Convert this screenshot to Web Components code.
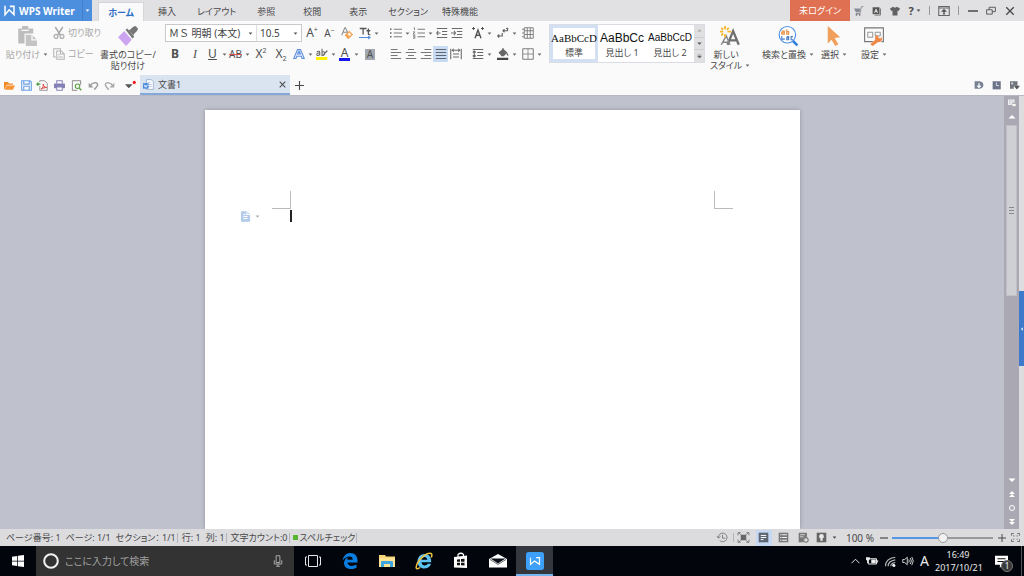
<!DOCTYPE html>
<html lang="ja">
<head>
<meta charset="utf-8">
<title>WPS Writer - 文書1</title>
<style>
html, body { margin: 0; height: 100%; }
body { font: 9px/12px "Noto Sans", "Noto Sans CJK JP", sans-serif; font-feature-settings: "palt"; color: #484848; overflow: hidden; }
</style>
</head>
<body>
<wps-app></wps-app>
<script>
const ICONS = {
  wps: '<path d="M1.500 1v13L7.500 7l7 7V2H8.500" fill="none" stroke="#fff" stroke-width="2.200"/>',
  caret: '<path d="M2 5h12l-6 7z" fill="currentColor"/>',
  up: '<path d="M1 11h14L8 4z" fill="currentColor"/>',
  down: '<path d="M1 5h14l-7 7z" fill="currentColor"/>',
  more: '<path d="M2 3h12M2 7h12l-6 6z" fill="currentColor" stroke="currentColor" stroke-width="1.500"/>',
  paste: '<path d="M1 2h3V0h5v2h4v4H6v8H1z" fill="#bdbdbd"/><path d="M3.500 3.500h6" stroke="#fafafa"/><path d="M7 7h5l4 4v5H7z" fill="#c4c4c4"/><path d="M12 7v4h4" fill="none" stroke="#fafafa"/>',
  cut: '<path d="M3 0l7 11M13 0L6 11" stroke="#aaa" stroke-width="2"/><g fill="none" stroke="#b4b4b4" stroke-width="1.800"><circle cx="4" cy="12.500" r="2.500"/><circle cx="12" cy="12.500" r="2.500"/></g>',
  copy: '<path d="M10 3V1H1v11h3M5 4h6l4 4v7H5zM10 4v4h5M7 9h2m-2 3h6" fill="none" stroke="#b4b4b4" stroke-width="1.400"/>',
  painter: '<path d="M5 4l6 7-4.500 5L0 9z" fill="#cda4f0"/><path d="M6 3l1.500-1L13 8.500 11.500 10z" fill="#777"/><path d="M8.500 3.500c2-.3 2.500-3 5.500-3.500l2 2c-.5 3-3 3-3.500 5.500z" fill="#777"/>',
  folder: '<path d="M0 3h6l1 2h6v2H4l-3 6H0z" fill="#f08a24"/><path d="M4 8h12l-3 6H1z" fill="#f79433"/>',
  save: '<path d="M1 1h12l2 2v12H1zM4 1v5h8V1M4 15V9h8v6" fill="none" stroke="#6aa0e8" stroke-width="1.600"/>',
  pdf: '<path d="M4 3V1h7l4 4v10H4V9" fill="none" stroke="#888" stroke-width="1.200"/><path d="M6 13c3-2 3.500-5 3-7 .5 3 2 4.500 5 5-3 0-5 .5-8 2z" fill="none" stroke="#d9362f" stroke-width="1.400"/><path d="M5 6H0m2-2L0 6l2 2" stroke="#4a9f3d" fill="none" stroke-width="2"/>',
  print: '<path d="M4 5V1h8v4" fill="#fff" stroke="#8583b8" stroke-width="1.500"/><rect y="5" width="16" height="7" rx="1" fill="#8280b4"/><path d="M4 10h8v5H4z" fill="#fff" stroke="#8583b8" stroke-width="1.500"/>',
  preview: '<path d="M14 7V1H2v14h7" fill="none" stroke="#777" stroke-width="1.200"/><circle cx="9.500" cy="9" r="3.300" fill="#eef7ea" stroke="#5da045" stroke-width="1.500"/><path d="M12 12l3 3" stroke="#5da045" stroke-width="2.200"/>',
  undo: '<path d="M3 9C5 4 13 2 14 6.500c.5 3-3 5.500-5 7.500" fill="none" stroke="#9a9a9a" stroke-width="2"/><path d="M1 4v7h7z" fill="#9a9a9a"/>',
  redo: '<path d="M13 9C11 4 3 2 2 6.500c-.5 3 3 5.500 5 7.500" fill="none" stroke="#aaa" stroke-width="2"/><path d="M15 4v7H8z" fill="#aaa"/>',
  quick: '<path d="M0 6h11l-5.500 6z" fill="#555"/><circle cx="13.500" cy="3.500" r="2.300" fill="#f01818"/>',
  docw: '<path d="M5 1h7l3 3v11H5z" fill="#fff" stroke="#7f9cc4"/><path d="M7 5h4M7 8h6M7 11h6" stroke="#9ab2d4"/><path d="M0 6h8v8H0z" fill="#3f86db"/><path d="M1.500 8l1.500 4 1-3 1 3 1.500-4" fill="none" stroke="#fff"/>',
  close: '<path d="M3 3l10 10M13 3L3 13" stroke="currentColor" stroke-width="1.800"/>',
  plus: '<path d="M8 0v16M0 8h16" stroke="currentColor" stroke-width="2"/>',
  minus: '<path d="M0 8h16" stroke="currentColor" stroke-width="2.400"/>',
  cart: '<path d="M0 4h10l-1 6H3z" fill="#888c96"/><path d="M15 1h-3l-2.500 11H3" fill="none" stroke="#888c96" stroke-width="1.500"/><circle cx="4" cy="14" r="1.500" fill="#777"/><circle cx="9" cy="14" r="1.500" fill="#777"/>',
  card: '<path d="M1 2h11v11H1z" fill="#555"/><path d="M13.500 4v10.500H4" stroke="#777" stroke-width="1.600" fill="none"/><path d="M4 11l2.500-6L9 11M5 9h3" stroke="#eee" stroke-width="1.400" fill="none"/>',
  shirt: '<path d="M5 1q3 3 6 0l5 3-2 4-2-1v8H4V7L2 8 0 4z" fill="#616161"/>',
  upbox: '<path d="M1 2h14v12H1zM1 4h14" fill="none" stroke="#666" stroke-width="1.400"/><path d="M8 5l4 4H9v4H7V9H4z" fill="#555"/>',
  restore: '<path d="M1 6h9v7H1zM5 6V2h10v7h-5" fill="none" stroke="#555" stroke-width="1.500"/>',
  eraser: '<path d="M1 11L5 1h1l4 9M3 7h5" fill="none" stroke="#8e8e8e" stroke-width="1.400"/><path d="M6 11l5-5 4 4-5 5z" fill="#fff3e4" stroke="#f0a050" stroke-width="1.600"/><path d="M6 11l2-2 4 4-2 2H8z" fill="#f2a452"/>',
  cases: '<path d="M1 2h9M5.500 2v8M10 5h5m-2.500-3v7q0 1.500 2.500 1" fill="none" stroke="#555" stroke-width="1.700"/><path d="M0 14h15m-3-2l3 2-3 2" stroke="#4a86dd" stroke-width="1.300" fill="none"/>',
  bullets: '<path d="M5 3h11M5 8h11M5 13h11" stroke="#777" stroke-width="1.300"/><path d="M0 2h2v2H0zM0 7h2v2H0zM0 12h2v2H0z" fill="#666"/>',
  numbers: '<path d="M6 3h10M6 8h10M6 13h10" stroke="#777" stroke-width="1.300"/><path d="M1 1h1v3M0 6.500h2.500L0 9.500h3M0 11.500h2.500v3.500H0m0-1.800h2" fill="none" stroke="#666"/>',
  outdent: '<path d="M1 2h14M8 6h7M8 10h7M1 14h14M6 8H1m2-3L1 8l2 3" fill="none" stroke="#6a6a6a" stroke-width="1.400"/>',
  indent: '<path d="M1 2h14M8 6h7M8 10h7M1 14h14M0 8h6M4 5l2 3-2 3" fill="none" stroke="#6a6a6a" stroke-width="1.400"/>',
  asian: '<path d="M4 15L8 4l4 11M5.500 11h5" fill="none" stroke="#505050" stroke-width="1.800"/><path d="M0 2h4M2 0v4M12 2h4M14 0v4" stroke="#505050" stroke-width="1.300"/>',
  marks: '<path d="M14 1v4H8m2-2L8 5l2 2M7 8v4H1m2-2l-2 2 2 2M12 2h3" fill="none" stroke="#666" stroke-width="1.600"/>',
  grid: '<path d="M3 1h12v14H3zM3 5h12M3 10h12M7 1v14M11 1v14M0 3h3M0 8h3M0 13h3" fill="none" stroke="#777" stroke-width="1.200"/>',
  left: '<path d="M1 2h9M1 6h14M1 10h9M1 14h14" stroke="#777" stroke-width="1.400"/>',
  center: '<path d="M4 2h8M1 6h14M4 10h8M1 14h14" stroke="#777" stroke-width="1.400"/>',
  right: '<path d="M6 2h9M1 6h14M6 10h9M1 14h14" stroke="#777" stroke-width="1.400"/>',
  justify: '<path d="M1 2h14M1 6h14M1 10h14M1 14h14" stroke="#5f6672" stroke-width="1.600"/>',
  dist: '<path d="M1 1v14M15 1v14M4 8h8M4 12h8M3 3h10m-8-2L3 3l2 2m6-4l2 2-2 2" fill="none" stroke="#6a6a6a" stroke-width="1.400"/>',
  spacing: '<path d="M1 2h14M7 6h8M7 10h8M1 14h14M3 4v8M1 6l2-2 2 2m-4 4l2 2 2-2" fill="none" stroke="#666" stroke-width="1.500"/>',
  fill: '<path d="M2 6l6-5 6 5-5 5H6z" fill="#666"/><path d="M13 6q3 2 2 5l-2-2z" fill="#666"/><path d="M8 0v4" stroke="#666" stroke-width="1.500"/><path d="M0 13h15v3H0z" fill="#444"/>',
  border: '<path d="M1 1h14v14H1z" fill="none" stroke="#777" stroke-width="1.300"/><path d="M8 1v14M1 8h14" stroke="#888" stroke-width="1.200"/>',
  highlight: '<path d="M0 12h15v4H0z" fill="#fff200"/><path d="M1 5q4-2 4 1v4M5 7q-4-1-4 1.500T5 9M8 1v9q4 0 3.500-3T8 5.500" fill="none" stroke="#666" stroke-width="1.400"/><path d="M8 10l6-7 2 1-6 6z" fill="#777"/>',
  outlineA: '<path d="M1 14L6 2h4l5 12h-3l-1-3H5l-1 3zM6 8h4L8 4z" fill="#e6effd" stroke="#5e8fdc" stroke-width="1.400"/>',
  newstyle: '<path d="M6 15l4.500-11L15 15M7.500 11.500h6" fill="none" stroke="#707070" stroke-width="1.800"/><path d="M1 15L5 8l3 7M2 13h5" fill="none" stroke="#888" stroke-width="1.200"/><path d="M4 0v2.500M4 6.500V9M0 4.500h2.500M6 4.500h3M1 1.500l1.500 1.500M7 1.500L5.500 3M1 7.500L2.500 6" stroke="#fbb62f" stroke-width="1.500"/>',
  search: '<circle cx="7.500" cy="7" r="6.600" fill="#fff" stroke="#4a90e2" stroke-width=".9"/><path d="M12 12l3.500 3.500" stroke="#2f7fdd" stroke-width="2"/><path d="M3 4h2v2.500H3V5h2M7 2.500v4h1.500V4.500H7" fill="none" stroke="#eb8c3c" stroke-width=".9"/><path d="M3 8v2.500h2.500M7 8.500h1.500V11H7V9.500h1.500M12 8.500h-1.500V11H12" fill="none" stroke="#4a80c8" stroke-width=".9"/>',
  pointer: '<path d="M3 0l10 9-4.500.5 3 5-2.500 1.500-3-5L3 14z" fill="#f0a05a"/>',
  settings: '<path d="M7 12.500H.5V1.500h15v11H14" fill="none" stroke="#777" stroke-width=".9"/><path d="M3 5h4v4H3zM9 5h4v3H9z" fill="none" stroke="#888" stroke-width=".7"/><path d="M5 14.500l4-3.500q-1-3 2-4v2l2 1 1.500-1q.5 4-3.500 4l-4 3z" fill="#ef8745"/>',
  download: '<path d="M1 2h8q6 1 6 6t-6 6H1z" fill="#788094"/><path d="M7 5v4H4l4 4 4-4H9V5z" fill="#fff"/>',
  clockbox: '<path d="M1 2h13v13H1z" fill="#6c7488"/><path d="M7 4v5h4" fill="none" stroke="#dde" stroke-width="1.500"/>',
  panel: '<path d="M0 2h12v7H6v5H0z" fill="#70757e"/><path d="M2 4h3v3H2z" fill="#ddd"/><path d="M6 9h10l-5 6z" fill="#555"/>',
  ruler: '<path d="M0 1h13v6H9v5H0z" fill="#eceef2"/><path d="M2 4h3M7 4h3M2 8h3" stroke="#888"/><path d="M8 9h8v6H8z" fill="#f7f7f7" stroke="#999"/>',
  dup: '<path d="M2 8h12L8 2zM2 14h12L8 8z" fill="currentColor"/>',
  ddown: '<path d="M2 2h12L8 8zM2 8h12l-6 6z" fill="currentColor"/>',
  ring: '<circle cx="8" cy="8" r="5" fill="none" stroke="currentColor" stroke-width="2"/>',
  pagetag: '<path d="M2 1h8l4 4v10H2z" fill="#b5cdec" stroke="#a3bfe4"/><path d="M10 1v4h4M5 5h3M5 8h6M5 11h6" fill="none" stroke="#fff" stroke-width="1.500"/>',
  history: '<path d="M2 8a6.300 6.300 0 1 1 2 4.500M0 6l2 3 3-2.500M8 4v5h4" fill="none" stroke="#777" stroke-width="1.300"/>',
  full: '<path d="M4 4h8v8H4z" fill="#666"/><path d="M0 5V1h4M12 1h4v4M16 11v4h-4M4 15H0v-4M1 1l3 3M15 1l-3 3M1 15l3-3M15 15l-3-3" fill="none" stroke="#777" stroke-width="1.300"/>',
  printview: '<path d="M1 1h14v14H1z" fill="#5d6673"/><path d="M4 5h8M4 8h8M4 11h4" stroke="#fff" stroke-width="1.400"/>',
  outline: '<path d="M1 1h14v14H1z" fill="#777"/><path d="M3 4h2m1 0h7M3 8h2m1 0h7M3 12h2m1 0h7" stroke="#fff" stroke-width="1.300"/>',
  web: '<path d="M1 1h12v6L8 9v6H1z" fill="#777"/><path d="M3 4h7M3 7h5" stroke="#ddd" stroke-width="1.300"/><circle cx="11.500" cy="11.500" r="3.300" fill="#ddd" stroke="#777" stroke-width="1.500"/>',
  eye: '<path d="M1 1h14v14H1z" fill="#666"/><circle cx="8" cy="6.500" r="3.500" fill="#e8e8e8"/><path d="M6.500 9h3v4h-3z" fill="#e8e8e8"/>',
  fit: '<path d="M1 5V1h4M11 1h4v4M15 11v4h-4M5 15H1v-4" fill="none" stroke="#777" stroke-width="1.800"/><path d="M4 4h2v2H4zM10 4h2v2h-2zM4 10h2v2H4zM10 10h2v2h-2z" fill="#777"/>',
  win: '<path d="M0 2.300l7-1v6.200H0zM8 1.100L16 0v7.500H8zM0 8.500h7v6.200l-7-1zM8 8.500h8V16l-8-1.100z" fill="#fff"/>',
  cortana: '<circle cx="8" cy="8" r="6.800" fill="none" stroke="#f2f2f2" stroke-width="2"/>',
  mic: '<path d="M5.500 1h5v9h-5zM3 7v5h10V7M8 12v3M5.500 15h5" fill="none" stroke="#b5b5b5" stroke-width="1.200"/>',
  taskview: '<path d="M3.500 2.500h9v11h-9zM2 4H.5v8H2M14 4h1.500v8H14" fill="none" stroke="#e6e6e6" stroke-width="1"/>',
  edge: '<path d="M.5 7.500C1.500 2.500 4.500 0 8.500 0 13 0 15.500 3.500 15.500 7v2.500H5.500c.2 4 5.500 4.200 9 2v3.200C10 17 2.500 16.500 2 10.500 2 7.500 3.500 5.300 6 4.500c-.5.700-.7 1.300-.7 2.200h5.400C10.700 2 4.500 2.500.5 7.500z" fill="#0a7ee0"/>',
  files: '<path d="M0 2h6l1 1.500h9V14H0z" fill="#f5d377"/><path d="M0 5h16v9H0z" fill="#fde394"/><path d="M2 14V9q0-1 1-1h10q1 0 1 1v5h-3v-3H5v3z" fill="#3fa7df"/>',
  ie: '<path d="M1.500 8.500C1.500 4 4.500 1 8.700 1 13 1 15.500 4.500 15.200 9.200H5.500c.3 4 5 4 6.200 1.600H15C13.500 17.300 1.500 17.500 1.500 8.500zM5.500 6.800h5.800C11 3 5.800 3 5.500 6.800z" fill="#5cc3f4"/><path d="M4 14.500C1 17 -.5 15.500.5 12.500 2.500 6 11-.8 15 .5c1.300.5 1 2.500.2 4" fill="none" stroke="#f0c33c" stroke-width="1.500"/>',
  store: '<path d="M1 4l13-1.500V15L1 14.500z" fill="#fff"/><path d="M5 4V1.500Q8-1 10.500 1.500V3" fill="none" stroke="#fff" stroke-width="1.200"/><path d="M4 6.500l3-.3v2.600H4zM8 6.100l3.500-.3v3H8zM4 9.700h3v2.500H4zM8 9.700h3.500v2.900L8 12.300z" fill="#111"/>',
  mail: '<path d="M-1 6l9-5 9 5v8.500H-1z" fill="#fff"/><path d="M.5 5.500h15L8 10.500z" fill="#0c1018"/><path d="M0 6.500l8 5 8-5" stroke="#0c1018" stroke-width=".6" fill="none"/>',
  wpsapp: '<rect width="16" height="16" rx="2.500" fill="#3da0fb"/><path d="M4 5v6l3.500-3 4.500 3V5H9" fill="none" stroke="#fff" stroke-width="1.100"/>',
  chevron: '<path d="M1 11l7-7 7 7" fill="none" stroke="#eee" stroke-width="1.700"/>',
  battery: '<path d="M3 5h11v7H3zM15.500 7v3" fill="none" stroke="#eee" stroke-width="1.300"/><path d="M7 6h6v5H7z" fill="#eee"/><path d="M0 3h5v3L3.500 7.500v3h-2v-3L0 6z" fill="#eee"/>',
  wifi: '<path d="M12 15h3M9 15q0-4 6-5M5.500 15q0-7 9.500-8.500M2 15Q2 4.500 15 3" fill="none" stroke="#bbb" stroke-width="1.500"/><circle cx="13" cy="13.500" r="2" fill="#eee"/>',
  sound: '<path d="M1 6h2.500L7 3v10L3.500 10H1zM9 6q1.500 2 0 4M11 4q3 4 0 8M13 2.500q4 5.500 0 11" fill="none" stroke="#e0e0e0" stroke-width="1.200"/>',
  notes: '<path d="M0 1h16v11H9l-3 4v-4H0z" fill="#fff"/><path d="M3 4.500h10M3 8h10" stroke="#111" stroke-width="1.300"/>'
};

const BASE = `
  *, *::before { box-sizing: border-box; }
  button { font: inherit; color: inherit; border: 0; background: none; padding: 0; margin: 0; display: flex; align-items: center; justify-content: center; flex: none; white-space: nowrap; }
  .grow { flex: 1; }
`;

function define(name, css, html) {
  customElements.define(name, class extends HTMLElement {
    constructor() {
      super();
      const root = this.attachShadow({ mode: 'open' });
      const tpl = document.createElement('template');
      tpl.innerHTML = `<style>${BASE}${css}</style>${typeof html === 'function' ? html(this) : html}`;
      root.append(tpl.content.cloneNode(true));
    }
  });
}

/* Square icon: name picks the drawing, --size sets its side. */
define('ui-icon', `
  :host { display: block; flex: none; width: var(--size, 12px); height: var(--size, 12px); }
  svg { display: block; width: 100%; height: 100%; overflow: visible; }
`, el => `<svg viewBox="0 0 16 16" aria-hidden="true">${ICONS[el.getAttribute('name')] || ''}</svg>`);

/* Small ribbon tool; "split" adds a drop-down arrow, "wide" more room. */
define('ui-tool', `
  :host { display: block; flex: none; width: 15px; }
  :host([wide]) { width: 20px; }
  :host([split]) { width: 23px; }
  :host([split][wide]) { width: 25px; }
  button { width: 100%; height: 16px; justify-content: center; }
  :host([split]) button { justify-content: flex-start; }
  .face { width: 15px; display: flex; justify-content: center; }
  .arrow { --size: 5px; margin-left: 2px; color: #666; }
  :host([active]) button { background: #c9dbf3; }
  ui-icon { --size: 12px; }
`, el => `<button type="button" aria-label="${el.getAttribute('label')}"><span class="face">${el.hasAttribute('icon') ? `<ui-icon name="${el.getAttribute('icon')}"></ui-icon>` : '<slot></slot>'}</span>${el.hasAttribute('split') ? '<ui-icon class="arrow" name="caret"></ui-icon>' : ''}</button>`);

/* Large ribbon button: icon above one or two lines of label. */
define('ui-big', `
  :host { display: block; flex: none; text-align: center; }
  button { flex-direction: column; justify-content: flex-start; width: 100%; line-height: 11px; }
  ui-icon { --size: 20px; margin-bottom: 3px; }
  .text { display: flex; align-items: end; gap: 3px; }
  .arrow { --size: 5px; margin: 0 0 3px; color: #666; }
  .lines { display: block; }
`, el => `<button type="button"><ui-icon name="${el.getAttribute('icon')}"></ui-icon><span class="text"><span class="lines"><slot></slot></span>${el.hasAttribute('split') ? '<ui-icon class="arrow" name="caret"></ui-icon>' : ''}</span></button>`);

define('wps-titlebar', `
  :host { display: flex; height: 21px; background: #e1e1e4; align-items: stretch; }
  .brand { width: 92px; background: #4b8fde; color: #fff; display: flex; align-items: center; font: bold 10px/20px "Noto Sans", sans-serif; padding-left: 4px; gap: 4px; }
  .brand ui-icon { --size: 11px; }
  .brand button { width: 10px; height: 21px; border-left: 1px solid #4280cc; margin-left: auto; }
  .brand button ui-icon { --size: 5px; }
  nav { display: flex; margin-left: 6px; padding-top: 2px; }
  nav button { min-width: 46px; padding: 1px 7px 0; }
  nav button[aria-selected=true] { background: #fafafa; color: #2d70c8; font-weight: bold; border: 1px solid #d6d6da; border-bottom: 0; }
  .login { width: 60px; background: #df7052; color: #fff; }
  .sys { display: flex; align-items: center; width: 174px; justify-content: space-between; padding: 0 8px 0 4px; }
  .sys ui-icon { --size: 10px; }
  .sys .big { --size: 12px; }
  .help { font: bold 11px/16px "Noto Sans", sans-serif; gap: 2px; }
  .sys .help ui-icon { --size: 5px; }
  i { width: 1px; height: 9px; background: #999; }
`, `
  <div class="brand"><ui-icon name="wps"></ui-icon><span>WPS Writer</span><button type="button" aria-label="アプリケーションメニュー"><ui-icon name="caret"></ui-icon></button></div>
  <nav role="tablist">
    ${['ホーム','挿入','レイアウト','参照','校閲','表示','セクション','特殊機能'].map((t, i) => `<button type="button" role="tab" aria-selected="${i === 0}">${t}</button>`).join('')}
  </nav>
  <span class="grow"></span>
  <button type="button" class="login">未ログイン</button>
  <div class="sys">
    <button type="button" aria-label="ストア"><ui-icon name="cart"></ui-icon></button>
    <button type="button" aria-label="フォント"><ui-icon name="card"></ui-icon></button>
    <button type="button" aria-label="スキン"><ui-icon name="shirt"></ui-icon></button>
    <button type="button" class="help">?<ui-icon name="caret"></ui-icon></button>
    <i></i>
    <button type="button" aria-label="リボンを隠す"><ui-icon class="big" name="upbox"></ui-icon></button>
    <i></i>
    <button type="button" aria-label="最小化"><ui-icon name="minus"></ui-icon></button>
    <button type="button" aria-label="元に戻す"><ui-icon name="restore"></ui-icon></button>
    <button type="button" aria-label="閉じる"><ui-icon class="big" name="close"></ui-icon></button>
  </div>
`);

define('wps-gallery', `
  :host { display: flex; flex: none; height: 39px; background: #fff; border: 1px solid #d9dce2; }
  .item { width: 48px; flex-direction: column; border: 3px solid transparent; padding: 2px 0 0; align-items: center; justify-content: space-between; }
  .item[aria-pressed=true] { border-color: #d3e0f3; }
  .item b { color: #111; font: 11px/16px "Liberation Serif", serif; }
  .item.h1 b { font: 12px/16px "Liberation Sans", sans-serif; }
  .item.h2 b { font: 10px/16px "Liberation Sans", sans-serif; }
  .scroll { display: flex; flex-direction: column; width: 10px; }
  .scroll button { flex: 1; width: 100%; background: #e0e0e2; border-top: 1px solid #cfcfd2; color: #555; }
  .scroll button:first-child { color: #aaa; border: 0; }
  ui-icon { --size: 5px; }
`, `
  <button type="button" class="item" aria-pressed="true"><b>AaBbCcD</b><span>標準</span></button>
  <button type="button" class="item h1"><b>AaBbCc</b><span>見出し 1</span></button>
  <button type="button" class="item h2"><b>AaBbCcD</b><span>見出し 2</span></button>
  <div class="scroll"><button type="button" aria-label="上へ"><ui-icon name="up"></ui-icon></button><button type="button" aria-label="下へ"><ui-icon name="down"></ui-icon></button><button type="button" aria-label="その他"><ui-icon name="more"></ui-icon></button></div>
`);

define('wps-ribbon', `
  :host { display: flex; align-items: flex-start; height: 54px; background: #fafafa; padding-top: 3px; }
  .row { display: flex; align-items: center; height: 18px; }
  .rows { display: flex; flex-direction: column; gap: 3px; flex: none; }
  .clip { display: flex; width: 165px; padding-left: 3px; }
  .clip .rows { width: 49px; }
  .off { color: #a6a6a6; }
  .clip .rows button { justify-content: flex-start; gap: 3px; height: 18px; padding-left: 2px; }
  .w48 { width: 48px; } .w56 { width: 56px; } .w40 { width: 40px; }
  ui-big { padding-top: 2px; }
  .font { width: 223px; }
  .combo { position: relative; display: flex; align-items: center; height: 18px; border: 1px solid #c9c9cc; background: #fff; }
  .combo + .combo { border-left-color: #ddd; margin-left: -1px; }
  .combo select { appearance: none; border: 0; background: none; width: 100%; height: 16px; padding: 0 10px 0 3px; font: 10px/16px "Noto Sans", "Noto Sans CJK JP", sans-serif; color: #444; }
  .combo ui-icon { --size: 5px; position: absolute; right: 3px; color: #555; pointer-events: none; }
  .face { width: 92px; } .size { width: 46px; }
  .s { font: 12px/16px "Noto Sans", sans-serif; color: #505050; }
  .s em { font-family: "Liberation Serif", serif; }
  .s.sm { font-size: 10px; }
  sup, sub { font-size: 7px; line-height: 0; }
  s { text-decoration-color: #d9534f; }
  .col { line-height: 10px; border-bottom: 3px solid #1616f0; padding: 0 2px; }
  .shade { background: #a2a6ae; font-size: 10px; line-height: 11px; padding: 0 2px; }
  .paraA { width: 82px; } .paraB { width: 79px; }
  wps-gallery { margin-right: 5px; }
  .find { margin-left: 12px; }
`, `
  <div class="clip">
    <ui-big class="w48 off" icon="paste" split>貼り付け</ui-big>
    <div class="rows off"><button type="button"><ui-icon name="cut"></ui-icon>切り取り</button><button type="button"><ui-icon name="copy"></ui-icon>コピー</button></div>
    <ui-big class="w56" icon="painter">書式のコピー/<br>貼り付け</ui-big>
  </div>
  <div class="rows font">
    <div class="row">
      <label class="combo face"><select aria-label="フォント"><option>ＭＳ 明朝 (本文)</option></select><ui-icon name="caret"></ui-icon></label>
      <label class="combo size"><select aria-label="フォントサイズ"><option>10.5</option></select><ui-icon name="caret"></ui-icon></label>
      <ui-tool wide label="拡大"><span class="s">A<sup>+</sup></span></ui-tool>
      <ui-tool label="縮小"><span class="s sm">A<sup>−</sup></span></ui-tool>
      <ui-tool wide label="書式のクリア" icon="eraser"></ui-tool>
      <ui-tool split label="文字種の変換" icon="cases"></ui-tool>
    </div>
    <div class="row">
      <ui-tool wide label="太字"><span class="s"><b>B</b></span></ui-tool>
      <ui-tool wide label="斜体"><span class="s"><em>I</em></span></ui-tool>
      <ui-tool split label="下線"><span class="s"><u>U</u></span></ui-tool>
      <ui-tool split label="取り消し線"><span class="s sm"><s>AB</s></span></ui-tool>
      <ui-tool wide label="上付き"><span class="s">X<sup>2</sup></span></ui-tool>
      <ui-tool wide label="下付き"><span class="s">X<sub>2</sub></span></ui-tool>
      <ui-tool split label="文字の効果" icon="outlineA"></ui-tool>
      <ui-tool split label="蛍光ペン" icon="highlight"></ui-tool>
      <ui-tool split label="フォントの色"><span class="s col">A</span></ui-tool>
      <ui-tool wide label="文字の網かけ"><span class="s shade">A</span></ui-tool>
    </div>
  </div>
  <div class="rows paraA">
    <div class="row"><ui-tool split label="箇条書き" icon="bullets"></ui-tool><ui-tool split label="段落番号" icon="numbers"></ui-tool><ui-tool label="インデントを減らす" icon="outdent"></ui-tool><ui-tool label="インデントを増やす" icon="indent"></ui-tool></div>
    <div class="row"><ui-tool label="左揃え" icon="left"></ui-tool><ui-tool label="中央揃え" icon="center"></ui-tool><ui-tool label="右揃え" icon="right"></ui-tool><ui-tool active label="両端揃え" icon="justify"></ui-tool><ui-tool label="均等割り付け" icon="dist"></ui-tool></div>
  </div>
  <div class="rows paraB">
    <div class="row"><ui-tool split wide label="拡張書式" icon="asian"></ui-tool><ui-tool split wide label="編集記号" icon="marks"></ui-tool><ui-tool label="グリッド線" icon="grid"></ui-tool></div>
    <div class="row"><ui-tool split wide label="行間" icon="spacing"></ui-tool><ui-tool split wide label="塗りつぶし" icon="fill"></ui-tool><ui-tool split wide label="罫線" icon="border"></ui-tool></div>
  </div>
  <wps-gallery></wps-gallery>
  <ui-big class="w40" icon="newstyle" split>新しい<br>スタイル</ui-big>
  <ui-big class="find" icon="search" split>検索と置換</ui-big>
  <ui-big class="w40" icon="pointer" split>選択</ui-big>
  <ui-big class="w40" icon="settings" split>設定</ui-big>
`);

define('wps-filebar', `
  :host { display: flex; height: 20px; background: #fafafa; align-items: center; }
  .quick { display: flex; width: 140px; justify-content: space-between; padding: 0 4px; }
  ui-icon { --size: 11px; }
  .quick button:nth-last-child(2) { margin-right: 4px; }
  .tab { display: flex; align-items: center; width: 150px; height: 20px; background: #dae4f1; border-bottom: 2px solid #85a8db; padding: 1px 3px 0; gap: 4px; }
  .tab button { margin-left: auto; }
  .tab button ui-icon { --size: 9px; }
  .add { margin-left: 5px; }
  .add ui-icon { --size: 9px; }
  .side { display: flex; gap: 8px; margin-left: auto; padding-right: 4px; }
  .side ui-icon { --size: 10px; }
`, `
  <div class="quick">${[['folder','開く'],['save','保存'],['pdf','PDF出力'],['print','印刷'],['preview','プレビュー'],['undo','元に戻す'],['redo','やり直し'],['quick','カスタマイズ']].map(([n, l]) => `<button type="button" aria-label="${l}"><ui-icon name="${n}"></ui-icon></button>`).join('')}</div>
  <div class="tab"><ui-icon name="docw"></ui-icon><span>文書1</span><button type="button" aria-label="文書を閉じる"><ui-icon name="close"></ui-icon></button></div>
  <button type="button" class="add" aria-label="新規文書"><ui-icon name="plus"></ui-icon></button>
  <div class="side"><button type="button" aria-label="ダウンロード"><ui-icon name="download"></ui-icon></button><button type="button" aria-label="履歴"><ui-icon name="clockbox"></ui-icon></button><button type="button" aria-label="パネル"><ui-icon name="panel"></ui-icon></button></div>
`);

define('wps-page', `
  :host { display: block; flex: none; width: 595px; background: #fff; box-shadow: 0 0 4px #8e919c; padding: 81px 67px 0; }
  .marks { display: flex; justify-content: space-between; }
  .marks i { width: 19px; height: 18px; border: 1px solid #bbb; border-top: 0; }
  .marks i:first-child { border-left: 0; }
  .marks i:last-child { border-right: 0; }
  .line { display: flex; align-items: center; margin: 1px 0 0 -32px; height: 12px; }
  .line ui-icon { --size: 11px; }
  .line button { gap: 4px; }
  .line .arrow { --size: 5px; color: #aaa; }
  .caret { width: 2px; height: 12px; background: #222; margin-left: 30px; }
`, `
  <div class="marks"><i></i><i></i></div>
  <div class="line"><button type="button" aria-label="段落オプション"><ui-icon name="pagetag"></ui-icon><ui-icon class="arrow" name="caret"></ui-icon></button><span class="caret"></span></div>
`);

define('wps-canvas', `
  :host { display: flex; flex: 1; min-height: 0; background: #bfc2cc; border-top: 1px solid #b6b8c2; }
  .view { flex: 1; display: flex; justify-content: center; padding-top: 14px; overflow: hidden; }
  .scroll { width: 15px; background: #aaa9b3; display: flex; flex-direction: column; align-items: center; color: #fff; }
  .scroll ui-icon { --size: 8px; }
  .scroll button { width: 15px; height: 14px; }
  .track { flex: 1; align-self: stretch; padding: 1px 2px 0; }
  .thumb { height: 49%; background: #cfd0d4; border: 1px solid #bfc0c6; display: flex; flex-direction: column; gap: 2px; align-items: center; justify-content: center; }
  .thumb i { width: 5px; height: 1px; background: #888; }
  .side { width: 5px; background: #dddde0; display: flex; align-items: center; }
  .side button { width: 5px; height: 75px; background: #3d7acb; color: #fff; margin-top: 32px; }
  .side ui-icon { --size: 4px; transform: rotate(-90deg); }
`, `
  <div class="view"><wps-page></wps-page></div>
  <div class="scroll">
    <button type="button" aria-label="ルーラー"><ui-icon name="ruler"></ui-icon></button>
    <button type="button" aria-label="上へスクロール"><ui-icon name="up"></ui-icon></button>
    <div class="track"><div class="thumb"><i></i><i></i><i></i></div></div>
    <button type="button" aria-label="下へスクロール"><ui-icon name="down"></ui-icon></button>
    <button type="button" aria-label="前のページ"><ui-icon name="dup"></ui-icon></button>
    <button type="button" aria-label="オブジェクトの選択"><ui-icon name="ring"></ui-icon></button>
    <button type="button" aria-label="次のページ"><ui-icon name="ddown"></ui-icon></button>
  </div>
  <div class="side"><button type="button" aria-label="作業ウィンドウ"><ui-icon name="up"></ui-icon></button></div>
`);

define('wps-status', `
  :host { display: flex; align-items: center; height: 17px; background: #dcdcdf; padding: 0 3px 0 6px; white-space: nowrap; }
  .info { display: flex; align-items: center; gap: 5px; }
  .info + .info { padding-left: 4px; }
  .sep { width: 1px; height: 9px; background: #b4b4b8; }
  .bar { border-right: 1px solid #b4b4b8; padding-right: 1px; line-height: 10px; }
  .spell { display: flex; align-items: center; gap: 2px; padding-left: 3px; }
  .spell i { width: 5px; height: 5px; background: #58b531; }
  .tools { display: flex; align-items: center; margin-left: auto; }
  .tools button { width: 20px; height: 16px; }
  .tools ui-icon { --size: 11px; }
  .tools .on { width: 16px; background: #c6d8f2; margin: 0 2px; }
  .tools .drop { gap: 5px; width: 26px; }
  .tools .drop .arrow { --size: 5px; }
  .zoom { margin: 0 5px 0 6px; font-size: 10px; }
  .tools .step { width: 9px; }
  .tools .step ui-icon { --size: 8px; }
  .tools .fit { width: 12px; margin-left: 3px; }
  .tools .fit ui-icon { --size: 9px; }
  input { appearance: none; width: 101px; height: 12px; margin: 0 4px; background: linear-gradient(90deg, #5596e6 50%, #999 50%) center/100% 2px no-repeat; }
  input::-webkit-slider-thumb { appearance: none; width: 10px; height: 10px; border-radius: 50%; background: #f2f2f2; border: 1px solid #999; }
`, `
  <div class="info"><span>ページ番号: 1</span><span>ページ: 1/1</span><span class="bar">セクション： 1/1</span></div>
  <div class="info"><span>行: 1</span><span class="bar">列: 1</span></div>
  <div class="info"><span class="bar">文字カウント:0</span></div>
  <div class="spell bar"><i></i><span>スペルチェック</span></div>
  <div class="tools">
    <button type="button" aria-label="履歴"><ui-icon name="history"></ui-icon></button><i class="sep"></i>
    <button type="button" aria-label="全画面"><ui-icon name="full"></ui-icon></button>
    <button type="button" class="on" aria-label="印刷レイアウト"><ui-icon name="printview"></ui-icon></button>
    <button type="button" aria-label="アウトライン"><ui-icon name="outline"></ui-icon></button>
    <button type="button" aria-label="Webレイアウト"><ui-icon name="web"></ui-icon></button>
    <button type="button" class="drop" aria-label="目の保護"><ui-icon name="eye"></ui-icon><ui-icon class="arrow" name="caret"></ui-icon></button>
    <span class="zoom">100 %</span>
    <button type="button" class="step" aria-label="縮小"><ui-icon name="minus"></ui-icon></button>
    <input type="range" min="0" max="200" value="100" aria-label="ズーム">
    <button type="button" class="step" aria-label="拡大"><ui-icon name="plus"></ui-icon></button>
    <button type="button" class="fit" aria-label="ページに合わせる"><ui-icon name="fit"></ui-icon></button>
  </div>
`);

define('win-taskbar', `
  :host { display: flex; height: 30px; background: #02060c; color: #e8e8e8; align-items: stretch; }
  .start { width: 36px; --size: 12px; }
  .search { display: flex; align-items: center; width: 258px; background: #333; padding: 0 10px 0 7px; gap: 6px; }
  .search ui-icon { --size: 16px; }
  .search ui-icon:last-child { --size: 12px; }
  input { flex: 1; min-width: 0; border: 0; padding: 0; background: none; color: #fff; font: 10px/16px "Noto Sans CJK JP", sans-serif; font-feature-settings: inherit; }
  input::placeholder { color: #a0a0a0; }
  .app { width: 37px; --size: 16px; }
  .app.on { background: #34383e; border-bottom: 2px solid #76b5ee; padding-top: 2px; --size: 18px; }
  .tray { display: flex; align-items: center; margin-left: auto; gap: 6px; }
  .tray ui-icon { --size: 12px; }
  .first ui-icon { --size: 9px; }
  .ime { font: 14px/16px "Noto Sans", sans-serif; }
  time { width: 46px; text-align: center; line-height: 13px; }
  .note { position: relative; width: 28px; height: 30px; }
  .note ui-icon { --size: 13px; }
  .badge { position: absolute; left: 14px; top: 14px; width: 12px; height: 12px; border-radius: 50%; background: #3a3a3a; border: 1px solid #777; line-height: 10px; text-align: center; }
  .edge { width: 3px; height: 30px; border-left: 1px solid #555; }
`, `
  <button type="button" class="start" aria-label="スタート"><ui-icon name="win"></ui-icon></button>
  <label class="search"><ui-icon name="cortana"></ui-icon><input type="text" placeholder="ここに入力して検索" aria-label="検索"><ui-icon name="mic"></ui-icon></label>
  ${[['taskview','タスクビュー'],['edge','Edge'],['files','エクスプローラー'],['ie','Internet Explorer'],['store','ストア'],['mail','メール'],['wpsapp','WPS Writer']].map(([n, l]) => `<button type="button" class="app${n === 'wpsapp' ? ' on' : ''}" aria-label="${l}"><ui-icon name="${n}"></ui-icon></button>`).join('')}
  <div class="tray">
    <button type="button" class="first" aria-label="隠れているインジケーター"><ui-icon name="chevron"></ui-icon></button>
    <ui-icon name="battery"></ui-icon><ui-icon name="wifi"></ui-icon><ui-icon name="sound"></ui-icon>
    <span class="ime">A</span>
    <time datetime="2017-10-21T16:49">16:49<br>2017/10/21</time>
    <button type="button" class="note" aria-label="通知"><ui-icon name="notes"></ui-icon><span class="badge">1</span></button>
    <span class="edge"></span>
  </div>
`);

define('wps-app', `
  :host { display: flex; flex-direction: column; height: 100vh; }
  wps-titlebar, wps-ribbon, wps-filebar, wps-status, win-taskbar { flex: none; }
`, `
  <wps-titlebar></wps-titlebar>
  <wps-ribbon></wps-ribbon>
  <wps-filebar></wps-filebar>
  <wps-canvas></wps-canvas>
  <wps-status></wps-status>
  <win-taskbar></win-taskbar>
`);
</script>
</body>
</html>
